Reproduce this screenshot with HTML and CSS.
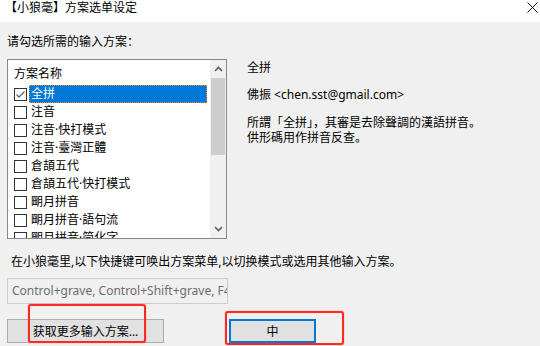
FILE: index.html
```html
<!DOCTYPE html>
<html lang="zh">
<head>
    <meta charset="UTF-8">
    <title>方案选单设定</title>
    <link rel="stylesheet" href="styles.css">
</head>
<body>
    <div class="window">
        <div class="titlebar">
            <span class="title">【小狼毫】方案选单设定</span>
            <svg class="close" width="11" height="11" viewBox="0 0 11 11">
                <path d="M0.5 0.5L10.5 10.5M10.5 0.5L0.5 10.5" stroke="#111" stroke-width="1" fill="none"/>
            </svg>
        </div>

        <div class="dialog">
            <div class="prompt">请勾选所需的输入方案：</div>

            <div class="main">
                <div class="listbox">
                    <div class="list">
                        <div class="list-header">方案名称</div>
                        <div class="row">
                            <span class="check">
                                <svg width="11" height="11" viewBox="0 0 11 11"><path d="M1.5 5.5L4 8L9.5 2.5" stroke="#666" stroke-width="1.3" fill="none"/></svg>
                            </span>
                            <span class="label selected">全拼</span>
                        </div>
                        <div class="row"><span class="check"></span><span class="label">注音</span></div>
                        <div class="row"><span class="check"></span><span class="label">注音·快打模式</span></div>
                        <div class="row"><span class="check"></span><span class="label">注音·臺灣正體</span></div>
                        <div class="row"><span class="check"></span><span class="label">倉頡五代</span></div>
                        <div class="row"><span class="check"></span><span class="label">倉頡五代·快打模式</span></div>
                        <div class="row"><span class="check"></span><span class="label">朙月拼音</span></div>
                        <div class="row"><span class="check"></span><span class="label">朙月拼音·語句流</span></div>
                        <div class="row"><span class="check"></span><span class="label">朙月拼音·简化字</span></div>
                    </div>
                    <div class="scrollbar">
                        <div class="arrow top">
                            <svg width="9" height="6" viewBox="0 0 9 6"><path d="M1 5L4.5 1.5L8 5" stroke="#606060" stroke-width="1.6" fill="none"/></svg>
                        </div>
                        <div class="track"><div class="thumb"></div></div>
                        <div class="arrow bottom">
                            <svg width="9" height="6" viewBox="0 0 9 6"><path d="M1 1L4.5 4.5L8 1" stroke="#606060" stroke-width="1.6" fill="none"/></svg>
                        </div>
                    </div>
                </div>

                <div class="details">
                    <div class="scheme-name">全拼</div>
                    <div class="author">佛振 &lt;chen.sst@gmail.com&gt;</div>
                    <div class="description">所謂「全拼」，其審是去除聲調的漢語拼音。<br>供形碼用作拼音反查。</div>
                </div>
            </div>

            <div class="hint">在小狼毫里,以下快捷键可唤出方案菜单,以切换模式或选用其他输入方案。</div>
            <div class="hotkeys">Control+grave, Control+Shift+grave, F4</div>

            <div class="buttons">
                <button class="btn more">获取更多输入方案...</button>
                <button class="btn ok">中</button>
            </div>
        </div>

        <!-- red annotation boxes drawn over the buttons -->
        <div class="mark mark-more"></div>
        <div class="mark mark-ok"></div>
    </div>
</body>
</html>
```

FILE: styles.css
```css
body {
    margin: 0;
    padding: 0;
    background: #f0f0f0;
    font-family: "Noto Sans", "Noto Sans CJK SC", sans-serif;
    font-size: 12px;
    color: #000;
    overflow: hidden;
}

.window {
    position: relative;
    width: 540px;
    height: 346px;
    overflow: hidden;
}

.titlebar {
    height: 22px;
    background: #fff;
    display: flex;
    justify-content: space-between;
    align-items: flex-start;
    padding: 0 2px 0 5px;
    box-sizing: border-box;
}

.title {
    line-height: 16px;
}

.close {
    margin-top: 2px;
}

.dialog {
    padding: 0 7px;
}

.prompt {
    margin-top: 12px;
    line-height: 16px;
}

.main {
    display: flex;
    margin-top: 9px;
}

.listbox {
    width: 220px;
    height: 180px;
    box-sizing: border-box;
    border: 1px solid #828790;
    background: #fff;
    display: flex;
    overflow: hidden;
}

.list {
    flex: 1;
    overflow: hidden;
}

.list-header {
    padding: 6px 0 3px 6px;
    line-height: 16px;
}

.row {
    height: 18px;
    display: flex;
    align-items: center;
}

.check {
    width: 13px;
    height: 13px;
    box-sizing: border-box;
    border: 1px solid #333;
    background: #fff;
    margin-left: 6px;
    display: flex;
    align-items: center;
    justify-content: center;
    flex-shrink: 0;
}

.label {
    flex: 1;
    margin: 0 3px 0 2px;
    padding-left: 2px;
    height: 18px;
    line-height: 18px;
    box-sizing: border-box;
    white-space: nowrap;
}

.label.selected {
    background: #0078d7;
    color: #fff;
    outline: 1px dotted #f08a30;
    outline-offset: -1px;
}

.scrollbar {
    width: 16px;
    background: #f0f0f0;
    display: flex;
    flex-direction: column;
}

.arrow {
    height: 18px;
    display: flex;
    align-items: center;
    justify-content: center;
}

.track {
    flex: 1;
    padding: 0 1px;
}

.thumb {
    height: 77px;
    background: #cdcdcd;
}

.details {
    margin-left: 20px;
    padding-top: 1px;
    line-height: 16px;
}

.author {
    margin-top: 11px;
}

.description {
    margin-top: 12px;
    line-height: 15px;
}

.hint {
    margin-top: 15px;
    padding-left: 4px;
    line-height: 16px;
}

.hotkeys {
    margin-top: 8px;
    width: 221px;
    height: 26px;
    box-sizing: border-box;
    border: 1px solid #cccccc;
    background: #f0f0f0;
    color: #6d6d6d;
    padding-left: 4px;
    line-height: 23px;
    white-space: nowrap;
    overflow: hidden;
}

.buttons {
    display: flex;
    margin-top: 15px;
}

.btn {
    height: 24px;
    box-sizing: border-box;
    background: #e1e1e1;
    border: 1px solid #adadad;
    font-family: inherit;
    font-size: 12px;
    color: #000;
    padding: 0;
}

.btn.more {
    width: 157px;
}

.btn.ok {
    width: 87px;
    margin-left: 65px;
    border: 2px solid #0078d7;
}

.mark {
    position: absolute;
    box-sizing: border-box;
    border: 2px solid #ff2a1f;
    border-radius: 3px;
    box-shadow: 0 0 1px #ff2a1f;
}

.mark-more {
    left: 28px;
    top: 304px;
    width: 118px;
    height: 39px;
}

.mark-ok {
    left: 225px;
    top: 311px;
    width: 119px;
    height: 34px;
}
```
